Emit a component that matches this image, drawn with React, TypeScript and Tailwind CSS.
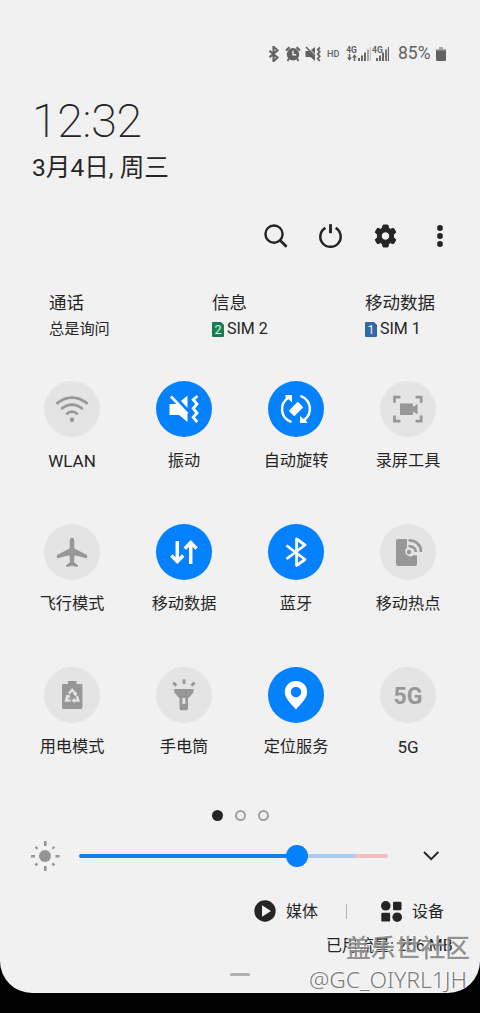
import type { ReactNode } from 'react';

interface Tile {
  label: string;
  active?: boolean;
  icon: ReactNode;
}

interface SimInfo {
  title: string;
  value: string;
  slot?: string;
  slotColor?: string;
  className: string;
}

const BluetoothPath = 'M6.5 9.5L17.5 19L12 24V4L17.5 9L6.5 18.5';

const sims: SimInfo[] = [
  { title: '通话', value: '总是询问', className: 'w-[163px]' },
  { title: '信息', value: 'SIM 2', slot: '2', slotColor: 'text-[#167f52]', className: 'w-[153px]' },
  { title: '移动数据', value: 'SIM 1', slot: '1', slotColor: 'text-[#3268a6]', className: '' },
];

// every tile icon is drawn on a 56x56 grid with its centre at 28,28
const tiles: Tile[] = [
  {
    label: 'WLAN',
    icon: (
      <g fill="none" stroke="currentColor" strokeWidth="2.6">
        <path d="M12.3 22.8Q28 10.5 43.7 22.8" />
        <path d="M17.2 28Q28 19.2 38.8 28" />
        <path d="M22.2 33.2Q28 28.2 33.8 33.2" />
        <circle cx="28" cy="38.7" r="2.2" fill="currentColor" stroke="none" />
      </g>
    ),
  },
  {
    label: '振动',
    active: true,
    icon: (
      <>
        <path d="M13.5 23H21L31.5 33.5V41L23 34H13.5ZM31.5 14.5V27L25 20Z" fill="currentColor" />
        <path d="M15 15.5L31.5 33" stroke="currentColor" strokeWidth="2.6" />
        <path d="M41.5 15L37.2 18.7L41 23L37.2 27.5L41 32L37.2 36.3L41.2 41" fill="none" stroke="currentColor" strokeWidth="2.8" />
      </>
    ),
  },
  {
    label: '自动旋转',
    active: true,
    icon: (
      <>
        <g fill="none" stroke="currentColor" strokeWidth="2.5">
          <path d="M23.5 41.2C12 36.5 11 23 20.5 16.5" />
          <path d="M32.5 14.8C44 19.5 45 33 35.5 39.5" />
        </g>
        <path d="M17.5 14H24V21.5L21.5 19L17.5 16.5ZM32 35V42H39.5L38 39.5L35 37.5Z" fill="currentColor" />
        <rect x="21.5" y="24" width="13" height="8" rx="1.2" transform="rotate(-45 28 28)" fill="currentColor" />
      </>
    ),
  },
  {
    label: '录屏工具',
    icon: (
      <>
        <path d="M14.5 21.8V16.2H20.5M35.5 16.2H41.2V21.8M41.2 34.5V40.2H35.5M20.5 40.2H14.5V34.5" fill="none" stroke="currentColor" strokeWidth="2.7" />
        <path d="M20 22.5H33V26L37.5 23V33.5L33 30.5V34H20Z" fill="currentColor" />
      </>
    ),
  },
  {
    label: '飞行模式',
    icon: (
      <path
        d="M28 13.8C29.7 13.8 30.3 15.3 30.3 17V24.5L43 31Q43.8 33.5 42.6 34.2L30.5 31.2L30 38L33.8 41.3V43L28 42L22.2 43V41.3L26 38L25.5 31.2L13.4 34.2Q12.2 33.5 13 31L25.7 24.5V17C25.7 15.3 26.3 13.8 28 13.8Z"
        fill="currentColor"
      />
    ),
  },
  {
    label: '移动数据',
    active: true,
    icon: (
      <path d="M21.3 17V37.5M15.4 31.5L21.3 37.6L27.2 31.5M34.7 40V18.5M28.8 24.6L34.7 18.5L40.6 24.6" fill="none" stroke="currentColor" strokeWidth="3.5" />
    ),
  },
  {
    label: '蓝牙',
    active: true,
    icon: (
      <path d="M18.5 21.5L37 35.5L28.6 41.5V15L37 21L18.5 35" fill="none" stroke="currentColor" strokeWidth="2.8" strokeLinejoin="round" />
    ),
  },
  {
    label: '移动热点',
    icon: (
      <>
        <path d="M18 15H27V23.5A5 5 0 1 0 33.5 31.2H37V40Q37 42 35 42H18Q16 42 16 40V17Q16 15 18 15Z" fill="currentColor" />
        <circle cx="29" cy="28" r="2.2" fill="currentColor" />
        <path d="M28.5 22Q35.5 22.3 35.8 28M28.5 16.3Q40.8 17 41 28" fill="none" stroke="currentColor" strokeWidth="2.6" />
      </>
    ),
  },
  {
    label: '用电模式',
    icon: (
      <>
        <path d="M24 14H32.5V17H37Q38.4 17 38.4 18.4V40.6Q38.4 42 37 42H19.4Q18 42 18 40.6V18.4Q18 17 19.4 17H24Z" fill="currentColor" />
        <g fill="none" stroke="#e4e4e4" strokeWidth="2.4">
          <path d="M25 26.5L28.2 22.8L31.3 26.8" />
          <path d="M33 29L34.3 33.5H29.5" />
          <path d="M26.5 33.5H22L23.5 29" />
        </g>
        <path d="M32.8 24.8V29.2L28.8 27.8ZM30.6 30.8V36.2L27.6 33.5ZM21.3 29L25.3 27.3L26 31.2Z" fill="#e4e4e4" />
      </>
    ),
  },
  {
    label: '手电筒',
    icon: (
      <>
        <path d="M18.3 22H37.5V25.5L32 31.5V41.5Q32 43.3 30.2 43.3H25.2Q23.5 43.3 23.5 41.5V31.5L18.3 25.5ZM26.4 31V37H29.3V31Z" fillRule="evenodd" fill="currentColor" />
        <path d="M28 12.2V17M17.3 15.5L20.3 18.7M38.5 15.5L35.5 18.7" stroke="currentColor" strokeWidth="2.8" />
      </>
    ),
  },
  {
    label: '定位服务',
    active: true,
    icon: (
      <path
        d="M28 14C21.5 14 16.8 18.9 16.8 25C16.8 31.5 23 36.5 28 42.5C33 36.5 39.2 31.5 39.2 25C39.2 18.9 34.5 14 28 14ZM28 19.8A5.2 5.2 0 1 1 28 30.2A5.2 5.2 0 1 1 28 19.8Z"
        fillRule="evenodd"
        fill="currentColor"
      />
    ),
  },
  {
    label: '5G',
    icon: (
      <text x="28" y="37" textAnchor="middle" fontSize="23" fontWeight="700" fill="currentColor">
        5G
      </text>
    ),
  },
];

function SignalBars({ strong }: { strong?: boolean }) {
  const faded = strong ? '#686868' : '#c4c4c4';
  return (
    <svg width="13" height="14" viewBox="0 0 13 14">
      <path d="M1 11V14M4 8.5V14M7 5.5V14" stroke="#686868" strokeWidth="2" />
      <path d="M10 2.5V14" stroke={strong ? '#686868' : '#a0a0a0'} strokeWidth="1.8" />
      <path d="M12.4 0V14" stroke={faded} strokeWidth="1.2" />
    </svg>
  );
}

function StatusBar() {
  return (
    <div className="flex h-9 items-center pl-[267px] text-[#626262]">
      <svg width="13" height="16" viewBox="5 3 14 22">
        <path d={BluetoothPath} fill="none" stroke="currentColor" strokeWidth="2.8" />
      </svg>
      <svg className="ml-[5px]" width="16" height="16" viewBox="0 0 16 16">
        <circle cx="8" cy="8.3" r="6.2" fill="currentColor" />
        <path d="M8 4.8V8.8H11.2" fill="none" stroke="#f1f1f1" strokeWidth="1.4" />
        <path d="M4 12.5L2.5 15M12 12.5L13.5 15" fill="none" stroke="currentColor" strokeWidth="1.8" />
        <path d="M1 4.5L4.5 1.2M15 4.5L11.5 1.2" stroke="currentColor" strokeWidth="2.2" />
      </svg>
      <svg className="ml-1" width="16" height="16" viewBox="12 12 32 32">
        <path d="M13 22H21L32 33V42L23 34H13ZM32 14V28L24 20Z" fill="currentColor" />
        <path d="M14 14L32 32" stroke="currentColor" strokeWidth="3" />
        <path d="M42 15L37.5 19L41.5 23.5L37.5 28L41.5 32.5L37.5 37L41.5 42" fill="none" stroke="currentColor" strokeWidth="3.6" />
      </svg>
      <span className="ml-[6px] w-[13px] text-[9px] leading-none font-medium">HD</span>
      <div className="ml-[5px] flex h-4 w-[13px] flex-col items-center">
        <span className="text-[8.5px] leading-[8px] font-bold">4G</span>
        <svg width="10" height="7" viewBox="0 0 10 7">
          <path d="M2.5 0V4M7.5 3V7" stroke="currentColor" strokeWidth="1.6" />
          <path d="M0 3.5H5L2.5 6.8ZM5 3.5H10L7.5 .2Z" fill="currentColor" />
        </svg>
      </div>
      <SignalBars />
      <div className="relative ml-[5px] flex h-[14px]">
        <SignalBars strong />
        <span className="absolute -top-px -left-[4px] text-[8.5px] leading-[8px] font-bold">4G</span>
      </div>
      <span className="ml-[9px] w-[34px] text-[17.5px] leading-none">85%</span>
      <svg className="ml-[4px]" width="10" height="14" viewBox="0 0 10 14">
        <path d="M3 0H7V2H10V4H0V2H3Z" fill="#a8a8a8" />
        <path d="M0 3.5H10V13Q10 14 9 14H1Q0 14 0 13Z" fill="currentColor" />
      </svg>
    </div>
  );
}

function Toolbar() {
  return (
    <div className="mt-[38px] flex h-7 items-center gap-[27px] pl-[262px]">
      <svg width="28" height="28" viewBox="0 0 28 28" fill="none" stroke="currentColor">
        <circle cx="12" cy="12.1" r="8.6" strokeWidth="2.4" />
        <path d="M18 18.2L24.6 24.8" strokeWidth="2.8" />
      </svg>
      <svg width="28" height="28" viewBox="0 0 28 28" fill="none" stroke="currentColor">
        <path d="M8.4 5.8A10.2 10.2 0 1 0 18.6 5.8" strokeWidth="2.5" />
        <path d="M13.5 2.2V11.2" strokeWidth="2.9" />
      </svg>
      <svg width="28" height="28" viewBox="0 0 28 28">
        <path
          d="M11.2 3H15.8L16.7 6.2L18.4 7.2L21.6 6.3L23.8 10.2L21.5 12.7V15.3L23.8 17.8L21.6 21.7L18.4 20.8L16.7 21.8L15.8 25H11.2L10.3 21.8L8.6 20.8L5.4 21.7L3.2 17.8L5.5 15.3V12.7L3.2 10.2L5.4 6.3L8.6 7.2L10.3 6.2ZM13.5 9.8A4.2 4.2 0 1 0 13.5 18.2A4.2 4.2 0 1 0 13.5 9.8Z"
          fill="currentColor"
          stroke="currentColor"
          strokeWidth="1"
          strokeLinejoin="round"
          fillRule="evenodd"
        />
      </svg>
      <svg width="28" height="28" viewBox="0 0 28 28" fill="currentColor">
        <circle cx="13" cy="6" r="2.9" />
        <circle cx="13" cy="14" r="2.9" />
        <circle cx="13" cy="22" r="2.9" />
      </svg>
    </div>
  );
}

function Brightness() {
  return (
    <div className="mt-[19px] flex h-8 items-center pl-[30px]">
      <svg className="text-[#959595]" width="30" height="30" viewBox="0 0 30 30" stroke="currentColor">
        <circle cx="15" cy="15" r="6" fill="currentColor" stroke="none" />
        <path d="M15.3 0V5M15.3 25V30M1 15.3H5M25.5 15.3H29.5" strokeWidth="2.6" />
        <path d="M5.4 5.8L7.4 7.8M24.4 5.8L22.4 7.8M5.4 24.4L7.4 22.4M24.4 24.4L22.4 22.4" strokeWidth="2.2" />
      </svg>
      <div className="relative ml-[19px] flex h-1 w-[309px]">
        <div className="w-[218px] rounded-l-full bg-[#1380ed]" />
        <div className="w-[59px] bg-[#aaccee]" />
        <div className="flex-1 rounded-r-full bg-[#f5bfbf]" />
        <div className="absolute -top-[9px] left-[207px] size-[22px] rounded-full bg-[#0381fe]" />
      </div>
      <svg className="ml-[35px]" width="16" height="10" viewBox="0 0 16 10">
        <path d="M1 1L8.2 8.2L15.4 1" fill="none" stroke="currentColor" strokeWidth="1.9" />
      </svg>
    </div>
  );
}

export default function App() {
  return (
    <div className="h-[1013px] w-[480px] overflow-hidden bg-black font-[Roboto,'Noto_Sans_CJK_SC',sans-serif] text-[#252525]">
      <div className="relative h-[993px] overflow-hidden rounded-b-[32px] bg-[#f1f1f1] pt-9">
        <StatusBar />

        <div className="pl-[32px]">
          <div className="mt-[24px] h-[50px] text-[46.5px] leading-[50px] font-extralight tracking-[-0.3px]">12:32</div>
          <div className="mt-[6px] h-8 text-[24.6px] leading-8">3月4日, 周三</div>
        </div>

        <Toolbar />

        <div className="mt-[41px] flex h-[50px] pl-[49px]">
          {sims.map((sim) => (
            <div key={sim.title} className={sim.className}>
              <div className="h-[25px] text-[17.5px] leading-[25px]">{sim.title}</div>
              <div className="mt-px flex h-6 items-center">
                {sim.slot ? (
                  <>
                    <svg className={sim.slotColor} width="12" height="15" viewBox="0 0 12 15">
                      <path d="M1 0H9L12 3V14Q12 15 11 15H1Q0 15 0 14V1Q0 0 1 0Z" fill="currentColor" />
                      <text x="6" y="12" textAnchor="middle" fontSize="12.5" fill="#e8f3ee">{sim.slot}</text>
                    </svg>
                    <span className="ml-[3px] text-base leading-6">{sim.value}</span>
                  </>
                ) : (
                  <span className="text-[15.2px] leading-6">{sim.value}</span>
                )}
              </div>
            </div>
          ))}
        </div>

        <div className="mt-[40px] grid auto-rows-[143px] grid-cols-4 px-4">
          {tiles.map((tile) => (
            <div key={tile.label + (tile.active ? '-on' : '')} className="flex flex-col items-center">
              <div
                className={`size-14 rounded-full ${
                  tile.active ? 'bg-[#0381fe] text-white' : 'bg-[#e4e4e4] text-[#979797]'
                }`}
              >
                <svg width="56" height="56" viewBox="0 0 56 56">
                  {tile.icon}
                </svg>
              </div>
              <span className={`mt-3 leading-6 ${/^[A-Z0-9]+$/.test(tile.label) ? 'text-[17px]' : 'text-[16.2px]'}`}>
                {tile.label}
              </span>
            </div>
          ))}
        </div>

        <div className="-mt-px flex h-[12px] items-center justify-center gap-3">
          <span className="size-[11px] rounded-full bg-[#252525]" />
          <span className="size-[11px] rounded-full border-2 border-[#a0a0a0]" />
          <span className="size-[11px] rounded-full border-2 border-[#a0a0a0]" />
        </div>

        <Brightness />

        <div className="mt-[27px] flex h-6 items-center pl-[254px] text-base leading-6">
          <svg width="22" height="22" viewBox="0 0 22 22">
            <circle cx="11" cy="11" r="10.7" fill="currentColor" />
            <path d="M8 5.3L17 11L8 16.7Z" fill="#f1f1f1" />
          </svg>
          <span className="mt-px ml-[10px]">媒体</span>
          <span className="ml-[28px] h-[15px] w-px bg-[#b5b5b5]" />
          <svg className="ml-[34px]" width="21" height="21" viewBox="0 0 21 21" fill="currentColor">
            <circle cx="4.8" cy="4.8" r="4.8" />
            <rect x="12" y=".8" width="8.5" height="8.5" rx="1.2" />
            <rect x=".3" y="11.8" width="8.8" height="8.8" rx="1.2" />
            <circle cx="16.2" cy="16.2" r="4.8" />
          </svg>
          <span className="mt-px ml-[10px]">设备</span>
        </div>

        <div className="mt-[11px] pl-[326px] text-base leading-6 whitespace-nowrap">已用流量: 256 MB</div>

        <div className="mt-[15px] ml-[230px] h-[3px] w-5 rounded-full bg-[#b0b0b0]" />

        {/* community watermark */}
        <div className="absolute top-[933px] right-[10px] text-[24.8px] leading-8 font-medium whitespace-nowrap text-[#777777]/80 [text-shadow:-1px_-1px_0_#ffffffb0]">
          盖乐世社区
        </div>
        <div className="absolute top-[968px] left-[309px] font-['Noto_Sans',sans-serif] text-[22.8px] leading-6 font-light whitespace-nowrap text-[#7c7c7c] [text-shadow:-1px_-1px_0_#ffffff]">
          @GC_OIYRL1JH
        </div>
      </div>
    </div>
  );
}
